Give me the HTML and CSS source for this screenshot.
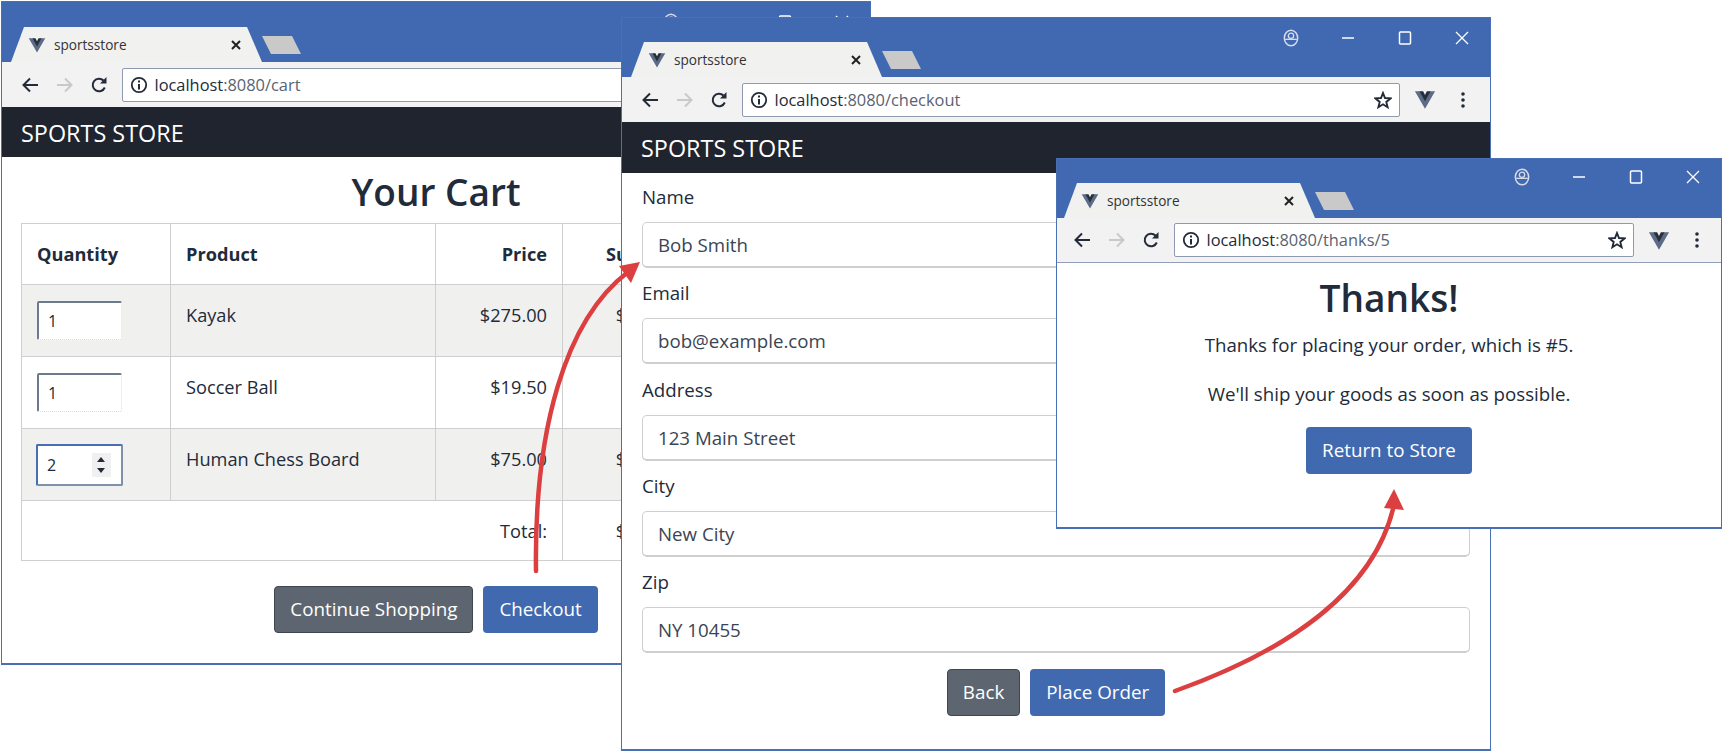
FILE: index.html
```html
<!DOCTYPE html>
<html lang="en">
<head>
	<meta charset="UTF-8">
	<title>sportsstore</title>
	<link rel="stylesheet" href="styles.css">
</head>
<body>
	<svg class="icon_defs" xmlns="http://www.w3.org/2000/svg">
		<symbol id="i_vue" viewBox="0 0 24 20">
			<polygon points="1,1 7,1 12,9 17,1 23,1 12,20" fill="#5c6c86"/>
			<polygon points="6,1 10,1 12,5 14,1 18,1 12,12" fill="#272e3c"/>
		</symbol>
		<symbol id="i_close" viewBox="0 0 12 12">
			<path d="M2 2l8 8M10 2l-8 8" fill="none" stroke="#222" stroke-width="2"/>
		</symbol>
		<symbol id="i_back" viewBox="0 0 18 18">
			<path d="M17 9H3M9 2.500L2.500 9 9 15.500" fill="none" stroke="currentColor" stroke-width="2"/>
		</symbol>
		<symbol id="i_reload" viewBox="0 0 18 18">
			<path d="M14.800 11.500A6.300 6.300 0 1 1 13.500 4.500" fill="none" stroke="currentColor" stroke-width="2"/>
			<polygon points="16.500,1 16.500,7.500 10,7.500" fill="currentColor"/>
		</symbol>
		<symbol id="i_info" viewBox="0 0 18 18">
			<circle cx="9" cy="9" r="7.200" fill="none" stroke="currentColor" stroke-width="1.800"/>
			<path d="M9 8v5.500M9 4.500v2" fill="none" stroke="currentColor" stroke-width="2"/>
		</symbol>
		<symbol id="i_star" viewBox="0 0 18 18">
			<polygon points="9,2 11,7 16.500,7.400 12.300,10.900 13.600,16.200 9,13.300 4.400,16.200 5.700,10.900 1.500,7.400 7,7" fill="none" stroke="currentColor" stroke-width="1.900"/>
		</symbol>
		<symbol id="i_dots" viewBox="0 0 4 18">
			<circle cx="2" cy="3" r="1.800" fill="currentColor"/>
			<circle cx="2" cy="9" r="1.800" fill="currentColor"/>
			<circle cx="2" cy="15" r="1.800" fill="currentColor"/>
		</symbol>
		<symbol id="i_profile" viewBox="0 0 18 20">
			<ellipse cx="9" cy="10" rx="7.500" ry="8.700" fill="none" stroke="#d5dbe8" stroke-width="1.700"/>
			<circle cx="9" cy="7.500" r="3" fill="none" stroke="#d5dbe8" stroke-width="1.500"/>
			<path d="M2.500 11.500h13" fill="none" stroke="#d5dbe8" stroke-width="1.500"/>
		</symbol>
		<symbol id="i_min" viewBox="0 0 14 14">
			<path d="M1 7h12" fill="none" stroke="#fff" stroke-width="1.500"/>
		</symbol>
		<symbol id="i_max" viewBox="0 0 14 14">
			<rect x="1.500" y="1" width="11" height="12" rx="1" fill="none" stroke="#fff" stroke-width="1.500"/>
		</symbol>
		<symbol id="i_x" viewBox="0 0 14 14">
			<path d="M1 1l12 12M13 1L1 13" fill="none" stroke="#fff" stroke-width="1.300"/>
		</symbol>
	</svg>

	<div class="desk">
		<!-- cart window -->
		<div class="window win_cart">
			<div class="titlebar">
				<div class="tab">
					<svg class="tab_logo"><use href="#i_vue"/></svg>
					<span class="tab_title">sportsstore</span>
					<svg class="tab_close"><use href="#i_close"/></svg>
				</div>
				<div class="newtab"></div>
				<div class="win_ctrl">
					<svg class="ctrl_profile"><use href="#i_profile"/></svg>
					<svg class="ctrl_icon"><use href="#i_min"/></svg>
					<svg class="ctrl_icon"><use href="#i_max"/></svg>
					<svg class="ctrl_icon"><use href="#i_x"/></svg>
				</div>
			</div>
			<div class="toolbar">
				<span class="nav_btn"><svg class="nav_icon"><use href="#i_back"/></svg></span>
				<span class="nav_btn nav_off"><svg class="nav_icon flip"><use href="#i_back"/></svg></span>
				<span class="nav_btn"><svg class="nav_icon"><use href="#i_reload"/></svg></span>
				<div class="url">
					<svg class="url_info"><use href="#i_info"/></svg>
					<span class="url_text">localhost<span class="url_rest">:8080/cart</span></span>
					<svg class="url_star"><use href="#i_star"/></svg>
				</div>
				<span class="ext_btn"><svg class="ext_icon"><use href="#i_vue"/></svg></span>
				<span class="menu_btn"><svg class="menu_icon"><use href="#i_dots"/></svg></span>
			</div>
			<div class="navbar">SPORTS STORE</div>
			<h2 class="page_title">Your Cart</h2>
			<div class="cart_body">
				<table class="cart">
					<colgroup>
						<col class="c_qty"><col class="c_product"><col class="c_price"><col class="c_sub"><col>
					</colgroup>
					<tr class="head_row">
						<th>Quantity</th><th>Product</th><th class="num">Price</th><th class="num">Subtotal</th><th></th>
					</tr>
					<tr class="stripe">
						<td class="qty_cell"><div class="qty">1</div></td>
						<td>Kayak</td><td class="num">$275.00</td><td class="num">$275.00</td><td></td>
					</tr>
					<tr>
						<td class="qty_cell"><div class="qty">1</div></td>
						<td>Soccer Ball</td><td class="num">$19.50</td><td class="num">$19.50</td><td></td>
					</tr>
					<tr class="stripe">
						<td class="qty_cell">
							<div class="qty qty_focus">2
								<span class="spin"><i class="spin_up"></i><i class="spin_down"></i></span>
							</div>
						</td>
						<td>Human Chess Board</td><td class="num">$75.00</td><td class="num">$150.00</td><td></td>
					</tr>
					<tr class="total_row">
						<td colspan="3" class="num">Total:</td><td class="num">$444.50</td><td></td>
					</tr>
				</table>
			</div>
			<div class="btn_row btn_row_cart">
				<a class="btn btn_grey">Continue Shopping</a>
				<a class="btn btn_blue">Checkout</a>
			</div>
		</div>

		<!-- checkout window -->
		<div class="window win_checkout">
			<div class="titlebar">
				<div class="tab">
					<svg class="tab_logo"><use href="#i_vue"/></svg>
					<span class="tab_title">sportsstore</span>
					<svg class="tab_close"><use href="#i_close"/></svg>
				</div>
				<div class="newtab"></div>
				<div class="win_ctrl">
					<svg class="ctrl_profile"><use href="#i_profile"/></svg>
					<svg class="ctrl_icon"><use href="#i_min"/></svg>
					<svg class="ctrl_icon"><use href="#i_max"/></svg>
					<svg class="ctrl_icon"><use href="#i_x"/></svg>
				</div>
			</div>
			<div class="toolbar">
				<span class="nav_btn"><svg class="nav_icon"><use href="#i_back"/></svg></span>
				<span class="nav_btn nav_off"><svg class="nav_icon flip"><use href="#i_back"/></svg></span>
				<span class="nav_btn"><svg class="nav_icon"><use href="#i_reload"/></svg></span>
				<div class="url">
					<svg class="url_info"><use href="#i_info"/></svg>
					<span class="url_text">localhost<span class="url_rest">:8080/checkout</span></span>
					<svg class="url_star"><use href="#i_star"/></svg>
				</div>
				<span class="ext_btn"><svg class="ext_icon"><use href="#i_vue"/></svg></span>
				<span class="menu_btn"><svg class="menu_icon"><use href="#i_dots"/></svg></span>
			</div>
			<div class="navbar">SPORTS STORE</div>
			<div class="form">
				<div class="group"><div class="label">Name</div><div class="input">Bob Smith</div></div>
				<div class="group"><div class="label">Email</div><div class="input">bob@example.com</div></div>
				<div class="group"><div class="label">Address</div><div class="input">123 Main Street</div></div>
				<div class="group"><div class="label">City</div><div class="input">New City</div></div>
				<div class="group"><div class="label">Zip</div><div class="input">NY 10455</div></div>
			</div>
			<div class="btn_row btn_row_form">
				<a class="btn btn_grey">Back</a>
				<a class="btn btn_blue">Place Order</a>
			</div>
		</div>

		<!-- thanks window -->
		<div class="window win_thanks">
			<div class="titlebar">
				<div class="tab">
					<svg class="tab_logo"><use href="#i_vue"/></svg>
					<span class="tab_title">sportsstore</span>
					<svg class="tab_close"><use href="#i_close"/></svg>
				</div>
				<div class="newtab"></div>
				<div class="win_ctrl">
					<svg class="ctrl_profile"><use href="#i_profile"/></svg>
					<svg class="ctrl_icon"><use href="#i_min"/></svg>
					<svg class="ctrl_icon"><use href="#i_max"/></svg>
					<svg class="ctrl_icon"><use href="#i_x"/></svg>
				</div>
			</div>
			<div class="toolbar toolbar_line">
				<span class="nav_btn"><svg class="nav_icon"><use href="#i_back"/></svg></span>
				<span class="nav_btn nav_off"><svg class="nav_icon flip"><use href="#i_back"/></svg></span>
				<span class="nav_btn"><svg class="nav_icon"><use href="#i_reload"/></svg></span>
				<div class="url">
					<svg class="url_info"><use href="#i_info"/></svg>
					<span class="url_text">localhost<span class="url_rest">:8080/thanks/5</span></span>
					<svg class="url_star"><use href="#i_star"/></svg>
				</div>
				<span class="ext_btn"><svg class="ext_icon"><use href="#i_vue"/></svg></span>
				<span class="menu_btn"><svg class="menu_icon"><use href="#i_dots"/></svg></span>
			</div>
			<div class="thanks">
				<h2 class="thanks_title">Thanks!</h2>
				<p class="thanks_line">Thanks for placing your order, which is #5.</p>
				<p class="thanks_line thanks_line2">We'll ship your goods as soon as possible.</p>
				<a class="btn btn_blue btn_return">Return to Store</a>
			</div>
		</div>

		<!-- red arrows between the windows -->
		<svg class="arrows" viewBox="0 0 1725 753">
			<path d="M536 571C534 430 565 320 628 272" fill="none" stroke="#dc3f40" stroke-width="4.500" stroke-linecap="round"/>
			<polygon points="640,262 619,266 631,283" fill="#dc3f40"/>
			<path d="M1175 691C1290 650 1375 590 1394 505" fill="none" stroke="#dc3f40" stroke-width="4.500" stroke-linecap="round"/>
			<polygon points="1394,489 1384,508 1404,510" fill="#dc3f40"/>
		</svg>
	</div>
</body>
</html>
```

FILE: styles.css
```css
body,h2,p{margin:0;padding:0}

body{
	background-color: #fff;
	font-family: "Open Sans", "Liberation Sans", sans-serif;
	font-size: 18.700px;
	line-height: 26px;
	color: #212b3a;
}
.icon_defs{
	display: none;
}
.desk{
	width: 1725px;
	height: 753px;
	position: relative;
	overflow: hidden;
}

/* windows sit on a free canvas */
.window{
	position: absolute;
	box-sizing: border-box;
	background-color: #fff;
	border: 1px solid #4a6fb3;
	border-bottom-width: 2px;
	overflow: hidden;
}
.win_cart{
	left: 1px;
	top: 1px;
	width: 870px;
	height: 664px;
}
.win_checkout{
	left: 621px;
	top: 17px;
	width: 870px;
	height: 734px;
}
.win_thanks{
	left: 1056px;
	top: 158px;
	width: 666px;
	height: 371px;
}

.titlebar{
	height: 60px;
	background-color: #4069b1;
	display: flex;
	align-items: flex-end;
}
.win_checkout .titlebar,.win_thanks .titlebar{
	height: 59px;
}
.tab{
	width: 251px;
	height: 35px;
	margin-left: 9px;
	background-color: #f1f1f0;
	clip-path: polygon(0 100%, 13px 0, 236px 0, 100% 100%);
	display: flex;
	align-items: center;
	flex-shrink: 0;
}
.win_thanks .tab{
	margin-left: 7px;
}
.tab_logo{
	width: 18px;
	height: 16px;
	margin-left: 17px;
}
.tab_title{
	margin-left: 8px;
	font-size: 13.600px;
	color: #333;
}
.tab_close{
	width: 12px;
	height: 12px;
	margin-left: auto;
	margin-right: 20px;
}
.newtab{
	width: 39px;
	height: 18px;
	margin-bottom: 8px;
	background-color: #c9c9ca;
	clip-path: polygon(0 0, 30px 0, 100% 100%, 9px 100%);
	flex-shrink: 0;
}
.win_ctrl{
	align-self: flex-start;
	margin-left: auto;
	display: grid;
	grid-template-columns: repeat(4, 57px);
	justify-items: center;
	align-items: center;
	height: 40px;
}
.win_thanks .win_ctrl{
	height: 36px;
}
.ctrl_profile{
	width: 16px;
	height: 18px;
}
.ctrl_icon{
	width: 14px;
	height: 14px;
}

.toolbar{
	height: 45px;
	box-sizing: border-box;
	background-color: #f2f2f2;
	display: flex;
	align-items: center;
	padding-left: 11px;
	padding-right: 14px;
}
.toolbar_line{
	border-bottom: 1px solid #8fa0b8;
	padding-left: 8px;
	padding-right: 11px;
}
.nav_btn{
	width: 34.500px;
	display: flex;
	justify-content: center;
	color: #232b38;
}
.nav_off{
	color: #c9c9c9;
}
.nav_icon{
	width: 18px;
	height: 18px;
}
.flip{
	transform: scaleX(-1);
}
.url{
	flex: 1;
	height: 34px;
	margin-left: 5px;
	box-sizing: border-box;
	background-color: #fff;
	border: 1px solid #8d9ab0;
	border-radius: 2px;
	display: flex;
	align-items: center;
	padding: 0 7px 0 7px;
}
.url_info{
	width: 18px;
	height: 18px;
	color: #232b38;
}
.url_text{
	margin-left: 7px;
	font-size: 16.400px;
	color: #232b38;
}
.url_rest{
	color: #596372;
}
.url_star{
	width: 18px;
	height: 18px;
	margin-left: auto;
	color: #232b38;
}
.ext_btn{
	width: 50px;
	display: flex;
	justify-content: center;
}
.ext_icon{
	width: 22px;
	height: 19px;
}
.menu_btn{
	width: 26px;
	display: flex;
	justify-content: center;
	color: #232b38;
}
.menu_icon{
	width: 4px;
	height: 18px;
}

.navbar{
	height: 50px;
	background-color: #20242e;
	color: #fff;
	font-size: 23.400px;
	line-height: 52px;
	padding-left: 19px;
}
.win_checkout .navbar{
	height: 51px;
}

/* cart */
.page_title{
	font-size: 37px;
	line-height: 48px;
	font-weight: 600;
	text-align: center;
	margin-top: 11px;
}
.cart_body{
	margin: 7px 19px 0;
}
.cart{
	width: 830px;
	table-layout: fixed;
	border-collapse: collapse;
	font-size: 18.200px;
}
.c_qty{width: 149px}
.c_product{width: 265px}
.c_price{width: 127px}
.c_sub{width: 136px}
.cart th,.cart td{
	border: 1px solid #cfcfcf;
	padding: 17px 15px 0;
	height: 72px;
	box-sizing: border-box;
	text-align: left;
	vertical-align: top;
	white-space: nowrap;
}
.cart th{
	font-weight: 700;
}
.cart .num{
	text-align: right;
}
.head_row th{
	height: 61px;
}
.stripe td{
	background-color: #f0f0ef;
}
.total_row td{
	height: 60px;
}
.cart .qty_cell{
	padding: 16px 0 0 15px;
}
.qty{
	width: 85px;
	height: 39px;
	box-sizing: border-box;
	background-color: #fff;
	border: 1px dotted #ddd;
	border-top: 2px solid #6c7a90;
	border-left: 2px solid #6c7a90;
	border-radius: 2px;
	padding: 5px 0 0 9px;
	font-size: 16px;
	position: relative;
}
.qty_focus{
	width: 87px;
	height: 42px;
	margin: -1px 0 0 -1px;
	border: 2px solid #7f90ab;
	border-top-color: #4a6fb0;
	border-left-color: #4a6fb0;
	padding-top: 6px;
}
.spin{
	position: absolute;
	right: 10px;
	top: 7px;
	width: 19px;
	height: 24px;
	background-color: #f0f0f0;
}
.spin_up,.spin_down{
	position: absolute;
	left: 5px;
	width: 0;
	height: 0;
	border-left: 4.500px solid transparent;
	border-right: 4.500px solid transparent;
}
.spin_up{
	top: 4px;
	border-bottom: 5px solid #232b38;
}
.spin_down{
	bottom: 4px;
	border-top: 5px solid #232b38;
}

/* buttons */
.btn_row{
	display: flex;
	justify-content: center;
	gap: 10px;
}
.btn_row_cart{
	margin-top: 25px;
}
.btn_row_form{
	margin-top: 15.500px;
}
.btn{
	display: inline-block;
	box-sizing: border-box;
	height: 47px;
	line-height: 45px;
	padding: 0 15px;
	border: 1px solid transparent;
	border-radius: 4px;
	color: #fff;
	font-size: 18.800px;
}
.btn_grey{
	background-color: #5d6670;
	border-color: #3f4650;
}
.btn_blue{
	background-color: #4069b0;
}

/* checkout form */
.form{
	padding: 11px 20px 0;
}
.group{
	margin-bottom: 12.250px;
}
.label{
	height: 26px;
	margin-bottom: 12px;
}
.input{
	height: 46px;
	box-sizing: border-box;
	line-height: 44px;
	padding: 0 15px;
	border: 1px solid #cfcfcf;
	border-bottom-width: 2px;
	border-radius: 5px;
	color: #3a4553;
}

/* thanks */
.thanks{
	padding-top: 11px;
	text-align: center;
}
.thanks_title{
	font-size: 37px;
	line-height: 48px;
	font-weight: 600;
}
.thanks_line{
	margin-top: 10px;
}
.thanks_line2{
	margin-top: 23px;
}
.btn_return{
	margin-top: 20px;
}

.arrows{
	position: absolute;
	left: 0;
	top: 0;
	width: 1725px;
	height: 753px;
	pointer-events: none;
}
```
